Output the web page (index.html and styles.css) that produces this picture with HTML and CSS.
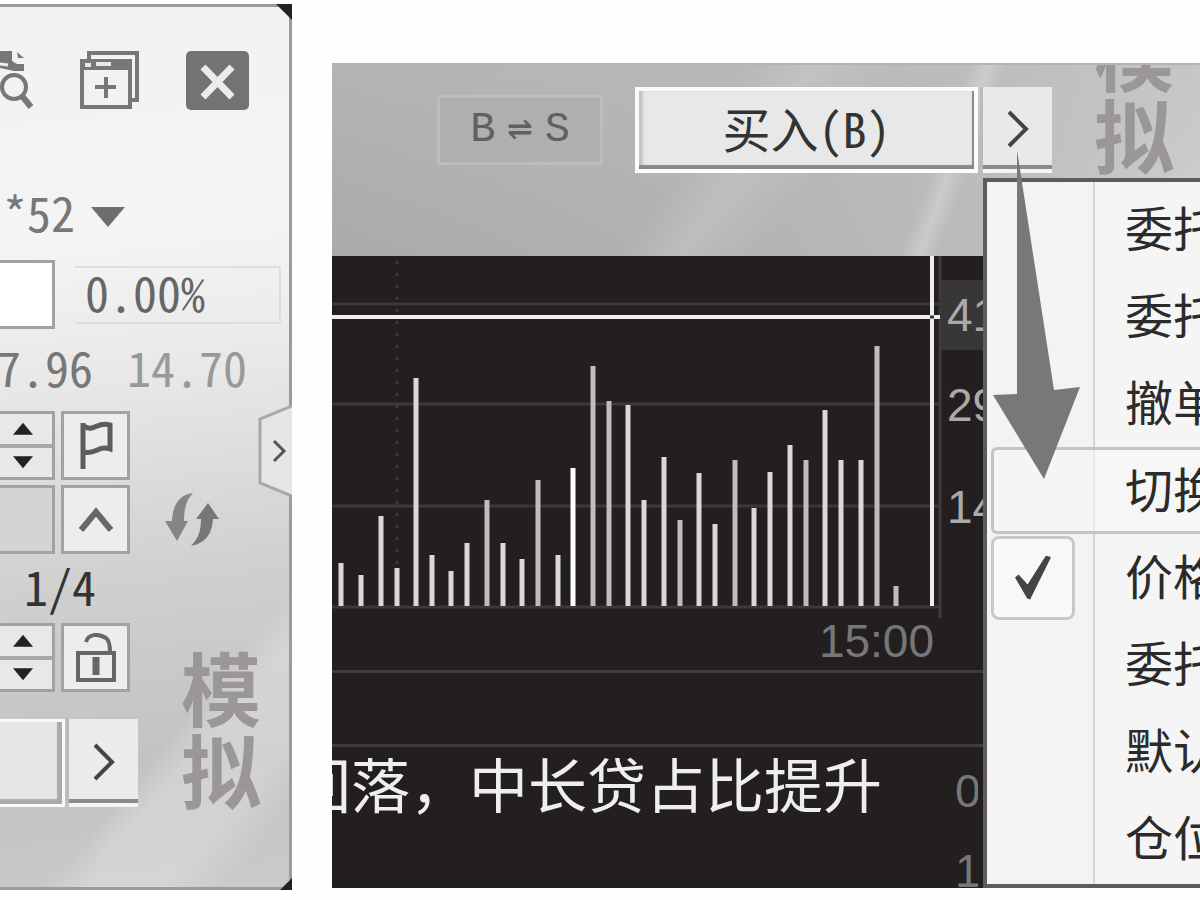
FILE: index.html
```html
<!DOCTYPE html>
<html lang="zh-CN">
<head>
<meta charset="utf-8">
<title>模拟交易</title>
<link rel="stylesheet" href="styles.css">
</head>
<body>
<aside class="panel">
  <i class="corner corner-top"></i>
  <i class="corner corner-bottom"></i>
  <div class="tools">
    <button class="icon-btn" aria-label="查找">
      <svg width="34" height="60" viewBox="0 0 34 60"><path d="M0 1H12V11L17 14H24V21H14L0 18Z" fill="#777"/><path d="M17 2L24 8H18Z" fill="#777"/><path d="M0 14L8 15M0 46V48" stroke="#eee" stroke-width="3"/><circle cx="14" cy="37" r="12" fill="#f2f2f2" stroke="#777" stroke-width="4"/><path d="M22 46L31 57" stroke="#777" stroke-width="6"/></svg>
    </button>
    <button class="icon-btn" aria-label="新建窗口">
      <svg width="60" height="60" viewBox="0 0 60 60" fill="none" stroke="#777" stroke-width="4"><path d="M9 9V3H57V50H50"/><rect x="2" y="11" width="48" height="46" fill="#f2f2f2"/><path d="M2 15H50" stroke-width="10"/><path d="M5 15H11M16 14H31" stroke="#e8e8e8" stroke-width="4"/><path d="M15 37H36M26 27V48"/></svg>
    </button>
    <button class="icon-btn" aria-label="关闭">
      <svg width="63" height="60" viewBox="0 0 63 60"><rect width="63" height="59" y="1" rx="5" fill="#747273"/><path d="M17 17L46 47M46 17L17 47" stroke="#ececec" stroke-width="7"/></svg>
    </button>
  </div>
  <div class="account"><span class="account-no">***52</span><svg width="34" height="20" viewBox="0 0 34 20"><path d="M0 0H34L17 20Z" fill="#6d6d6d"/></svg></div>
  <div class="row price-row"><input class="field price-input" aria-label="价格"><output class="percent">0.00%</output></div>
  <div class="limits"><span class="limit-up">7.96</span><span class="limit-down">14.70</span></div>
  <div class="row">
    <div class="spinner"><button aria-label="增加"><i class="up"></i></button><button aria-label="减少"><i class="down"></i></button></div>
    <button class="square" aria-label="标记"><svg width="36" height="50" viewBox="0 0 36 50" fill="none" stroke="#5d5d5d"><path d="M5 2V48" stroke-width="5"/><path d="M6 5C15 12 19 0 32 4V28C20 24 18 34 6 31" stroke-width="5"/></svg></button>
  </div>
  <div class="row">
    <input class="field grey" aria-label="金额">
    <button class="square" aria-label="展开"><svg width="36" height="28" viewBox="0 0 36 28"><path d="M3 24L18 6L33 24" fill="none" stroke="#686868" stroke-width="6"/></svg></button>
    <button class="icon-btn refresh" aria-label="刷新"><svg width="54" height="54" viewBox="0 0 54 54" fill="#858585"><path d="M28 0C15 2 8 10 7 28H0L12 48L23 28H19C19 16 21 7 28 0Z"/><path d="M26 53C40 50 47 42 48 26H54L43 10L31 26H36C36 38 33 46 26 53Z" fill="#777"/></svg></button>
  </div>
  <div class="fraction">1/4</div>
  <div class="row">
    <div class="spinner"><button aria-label="增加"><i class="up"></i></button><button aria-label="减少"><i class="down"></i></button></div>
    <button class="square" aria-label="解锁"><svg width="40" height="50" viewBox="0 0 40 50" fill="none" stroke="#666" stroke-width="4"><path d="M10 9C12 1 22 0 30 5Q34 8 34 19"/><rect x="2" y="20" width="36" height="27"/><path d="M20 24V42" stroke-width="7"/></svg></button>
  </div>
  <div class="row trade-row">
    <button class="raised" aria-label="买入"></button>
    <button class="raised-more" aria-label="更多"><svg class="chevron" width="22" height="38" viewBox="0 0 22 38"><path d="M2 2L19 19L2 36"/></svg></button>
  </div>
  <div class="watermark">模拟</div>
  <button class="side-tab" aria-label="收起"><svg width="34" height="92" viewBox="0 0 34 92" fill="none"><path d="M34 1L2 14V78L34 91" fill="#e6e6e6" stroke="#a8a8a8" stroke-width="3"/><path d="M16 36L26 46L16 56" stroke="#555" stroke-width="3"/></svg></button>
</aside>

<main class="desk">
  <header class="toolbar">
    <button class="swap"><span>B</span><span>⇌</span><span>S</span></button>
    <button class="buy">买入(B)</button>
    <button class="buy-more" aria-label="更多"><svg class="chevron" width="22" height="38" viewBox="0 0 22 38"><path d="M2 2L19 19L2 36"/></svg></button>
    <div class="watermark-top">模拟</div>
  </header>
  <section class="market">
    <svg class="chart" width="651" height="414" viewBox="0 0 651 414">
      <rect x="609" y="24" width="42" height="70" fill="#393637"/>
      <g stroke="#3d393a" stroke-width="3"><path d="M0 48H608M0 148H608M0 250H608M0 351H608M608 0V362"/><path d="M65 5V346" stroke-dasharray="3 9"/></g>
      <g stroke="#d9d9d9" stroke-width="5"><path d="M9 350V307M29 350V319M49 350V260M65 350V312M84 350V122M100 350V299M119 350V315M135 350V287M171 350V287M190 350V303M226 350V299M296 350V149M312 350V244M332 350V201M367 350V217M383 350V268M422 350V252M438 350V216M458 350V189M493 350V154M509 350V204M529 350V204"/></g>
      <g stroke="#bdbdbd" stroke-width="5"><path d="M155 350V244M206 350V224M261 350V110M277 350V145M348 350V264M403 350V204M474 350V204M545 350V90M564 350V330"/></g>
      <path d="M241 350V212" stroke="#fff" stroke-width="5"/>
      <path d="M0 61H608M600 0V350" stroke="#eee" stroke-width="4"/><path d="M598 61H602" stroke="#333" stroke-width="3"/>
      <g class="axis"><text x="615" y="75">41</text><text x="615" y="165">29</text><text x="615" y="267">14</text><text class="time" x="602" y="401" text-anchor="end">15:00</text></g>
    </svg>
    <div class="strip"></div>
    <div class="news"><p class="headline">回落，中长贷占比提升</p><div class="scale"><span>0</span><span>1</span></div></div>
  </section>
  <ul class="menu">
    <li><button>委托</button></li>
    <li><button>委托</button></li>
    <li><button>撤单</button></li>
    <li class="active"><button>切换</button></li>
    <li><label><input type="checkbox" checked><span>价格</span></label></li>
    <li><button>委托</button></li>
    <li><button>默认</button></li>
    <li><button>仓位</button></li>
  </ul>
  <svg class="pointer" width="88" height="330" viewBox="0 0 88 330"><path d="M25 0L62 240L88 237L52 329L1 245L25 244Z" fill="#797778"/></svg>
</main>
</body>
</html>
```
FILE: styles.css
```css
* { box-sizing: border-box; }
body {
  margin: 0;
  padding-top: 4px;
  display: flex;
  gap: 40px;
  align-items: flex-start;
  overflow: hidden;
  background: #fefefe;
  color: #333;
  font-family: "Noto Sans CJK SC", sans-serif;
  font-size: 48px;
  line-height: 56px;
  font-feature-settings: "hwid";
}
button, input { font: inherit; font-feature-settings: inherit; color: inherit; border: 0; padding: 0; margin: 0; }
button { display: flex; align-items: center; justify-content: center; }
svg { display: block; }

.panel {
  position: relative;
  flex: none;
  width: 292px;
  padding: 43px 0 80px;
  border: solid #9b9b9b;
  border-width: 3px 3px 3px 0;
  background:
    linear-gradient(130deg, transparent 76%, #dcdcdc99 80%, #dcdcdc99 88%, transparent 94%),
    linear-gradient(174deg, #f2f2f2 0, #f4f4f4 27%, #e8e8e8 42%, #d0d0d0 64%, #c2c2c2 85%, #cacaca 100%);
}
.corner { position: absolute; right: -3px; width: 16px; height: 16px; background: #222; }
.corner-top { top: -3px; clip-path: polygon(0 0, 100% 0, 100% 100%); }
.corner-bottom { bottom: -3px; width: 12px; height: 12px; clip-path: polygon(100% 0, 100% 100%, 0 100%); }
.tools { display: flex; gap: 46px; }
.icon-btn { background: none; }
.account { display: flex; align-items: center; gap: 16px; height: 56px; margin-top: 76px; color: #777; }
.account-no { display: flex; justify-content: flex-end; width: 75px; flex: none; padding-bottom: 6px; }
.account svg { margin-top: 6px; }
.row { display: flex; gap: 6px; height: 69px; margin-bottom: 5px; }
.field { flex: none; width: 55px; border: 3px solid #a2a2a2; border-left: 0; background: #fff; }
.grey { background: #d4d4d4; }
.price-row { margin: 18px 0 0; gap: 20px; align-items: center; }
.price-input { height: 69px; }
.percent { width: 206px; height: 58px; padding-left: 10px; border: 2px solid #dedede; border-left: 0; line-height: 46px; color: #666; }
.limits { display: flex; gap: 34px; height: 60px; margin: 9px 0 13px; color: #777; }
.limit-up { display: flex; justify-content: flex-end; width: 93px; }
.limit-down { color: #999; }
.spinner { display: flex; flex-direction: column; flex: none; width: 55px; border: solid #a2a2a2; border-width: 3px 3px 3px 0; background: #a8a8a8; gap: 4px; }
.spinner button { flex: 1; width: 52px; background: #e8e8e8; }
.spinner i { width: 20px; height: 12px; background: #222; margin-right: 6px; }
.up { clip-path: polygon(50% 0, 100% 100%, 0 100%); }
.down { clip-path: polygon(0 0, 100% 0, 50% 100%); }
.square { width: 69px; border: 3px solid #a2a2a2; background: #ededed; }
.refresh { margin-left: 29px; }
.fraction { height: 64px; padding-left: 24px; line-height: 52px; }
.trade-row { height: 88px; margin: 27px 0 0; gap: 4px; }
.raised { width: 65px; border: 3px solid #fafafa; border-left: 0; background: #e6e6e6; box-shadow: inset -5px -5px 1px #aaa; }
.raised-more { width: 69px; height: 84px; padding-top: 6px; border-bottom: 4px solid #8b8b8b; background: #ebebeb; box-shadow: 0 4px #f5f5f5, -3px 0 #bbb; }
.chevron { fill: none; stroke: #444; stroke-width: 4; }
.watermark, .watermark-top { font-size: 80px; font-weight: bold; line-height: 82px; width: 80px; color: #9b9798; }
.watermark { position: absolute; left: 181px; top: 637px; }
.side-tab { position: absolute; right: -3px; top: 398px; background: none; }

.desk { position: relative; flex: 1; min-width: 0; margin-top: 59px; overflow: hidden; }
.toolbar {
  display: flex;
  align-items: flex-start;
  height: 193px;
  padding: 22px 0 0 105px;
  border-top: 2px solid #b4b4b4;
  overflow: hidden;
  background:
    linear-gradient(125deg, transparent 42%, #cfcfcf66 48%, #cfcfcf33 52%, transparent 56%),
    linear-gradient(110deg, transparent 68%, #dddddd77 70%, transparent 72%),
    linear-gradient(#bdbdbd88, transparent),
    linear-gradient(90deg, #aaa, #b2b2b2 45%, #bcbcbc 75%, #d0d0d0);
}
.swap { flex: none; gap: 12px; width: 166px; height: 70px; margin-top: 8px; border: 3px solid #bdbdbd; background: #afafaf; color: #606060; font-family: "Liberation Mono", "DejaVu Sans Mono", monospace; font-size: 42px; }
.buy { flex: none; width: 343px; height: 86px; margin-left: 32px; padding-bottom: 6px; border: 4px solid #fcfcfc; background: #e8e8e8; box-shadow: inset -2px -4px 1px #888, inset 4px 0 2px #c6c6c6; }
.buy-more { flex: none; width: 69px; height: 82px; margin-left: 5px; padding-top: 6px; border-bottom: 4px solid #8b8b8b; background: #e9e9e9; box-shadow: 0 4px #f5f5f5, -3px 0 #bbb; }
.watermark-top { flex: none; align-self: flex-end; margin-left: 42px; padding-bottom: 83px; }
.market { background: #231f20; height: 632px; }
.axis { font: 46px "Liberation Sans", Arial, sans-serif; fill: #aaa; }
.time { fill: #777; }
.strip { height: 77px; border: solid #3f3c3d; border-width: 3px 0; }
.news { display: flex; width: 646px; height: 141px; overflow: hidden; }
.headline { display: flex; justify-content: flex-end; width: 550px; flex: none; margin: 0; font-size: 59px; font-feature-settings: normal; line-height: 72px; color: #eee; white-space: nowrap; }
.scale { margin-left: 73px; padding-top: 4px; font: 46px/80px "Liberation Sans", Arial, sans-serif; color: #777; }
.scale span { display: block; }

.menu {
  position: absolute;
  left: 651px;
  right: 0;
  top: 115px;
  bottom: 0;
  margin: 0;
  padding: 4px 0 4px 4px;
  list-style: none;
  border: solid #5d5b5c;
  border-width: 4px 0 4px 4px;
  background: linear-gradient(90deg, #f3f3f3 106px, #d4d4d4 106px, #d4d4d4 108px, #f5f5f5 108px);
  overflow: hidden;
}
.menu li { height: 87px; overflow: hidden; }
.menu button, .menu label { display: flex; align-items: center; justify-content: flex-start; width: 100%; height: 87px; padding: 0 0 8px 134px; background: none; white-space: nowrap; color: #2b2b2b; }
.menu .active { border: 3px solid #c4c4c4; border-right: 0; border-radius: 6px 0 0 6px; background: #f7f7f799; }
.menu .active button { height: 81px; padding-left: 131px; }
.menu label { padding: 0; }
.menu label span { padding-bottom: 8px; }
.menu input { appearance: none; flex: none; display: grid; place-items: center; width: 84px; height: 84px; margin-right: 50px; border: 3px solid #c8c8c8; border-radius: 8px; background: #f8f8f8; }
.menu input::before { content: ""; width: 36px; height: 44px; background: #444; clip-path: polygon(0 50%, 10% 43%, 35% 66%, 86% 0, 100% 4%, 42% 100%, 34% 98%); }
.pointer { position: absolute; left: 660px; top: 87px; }
```
